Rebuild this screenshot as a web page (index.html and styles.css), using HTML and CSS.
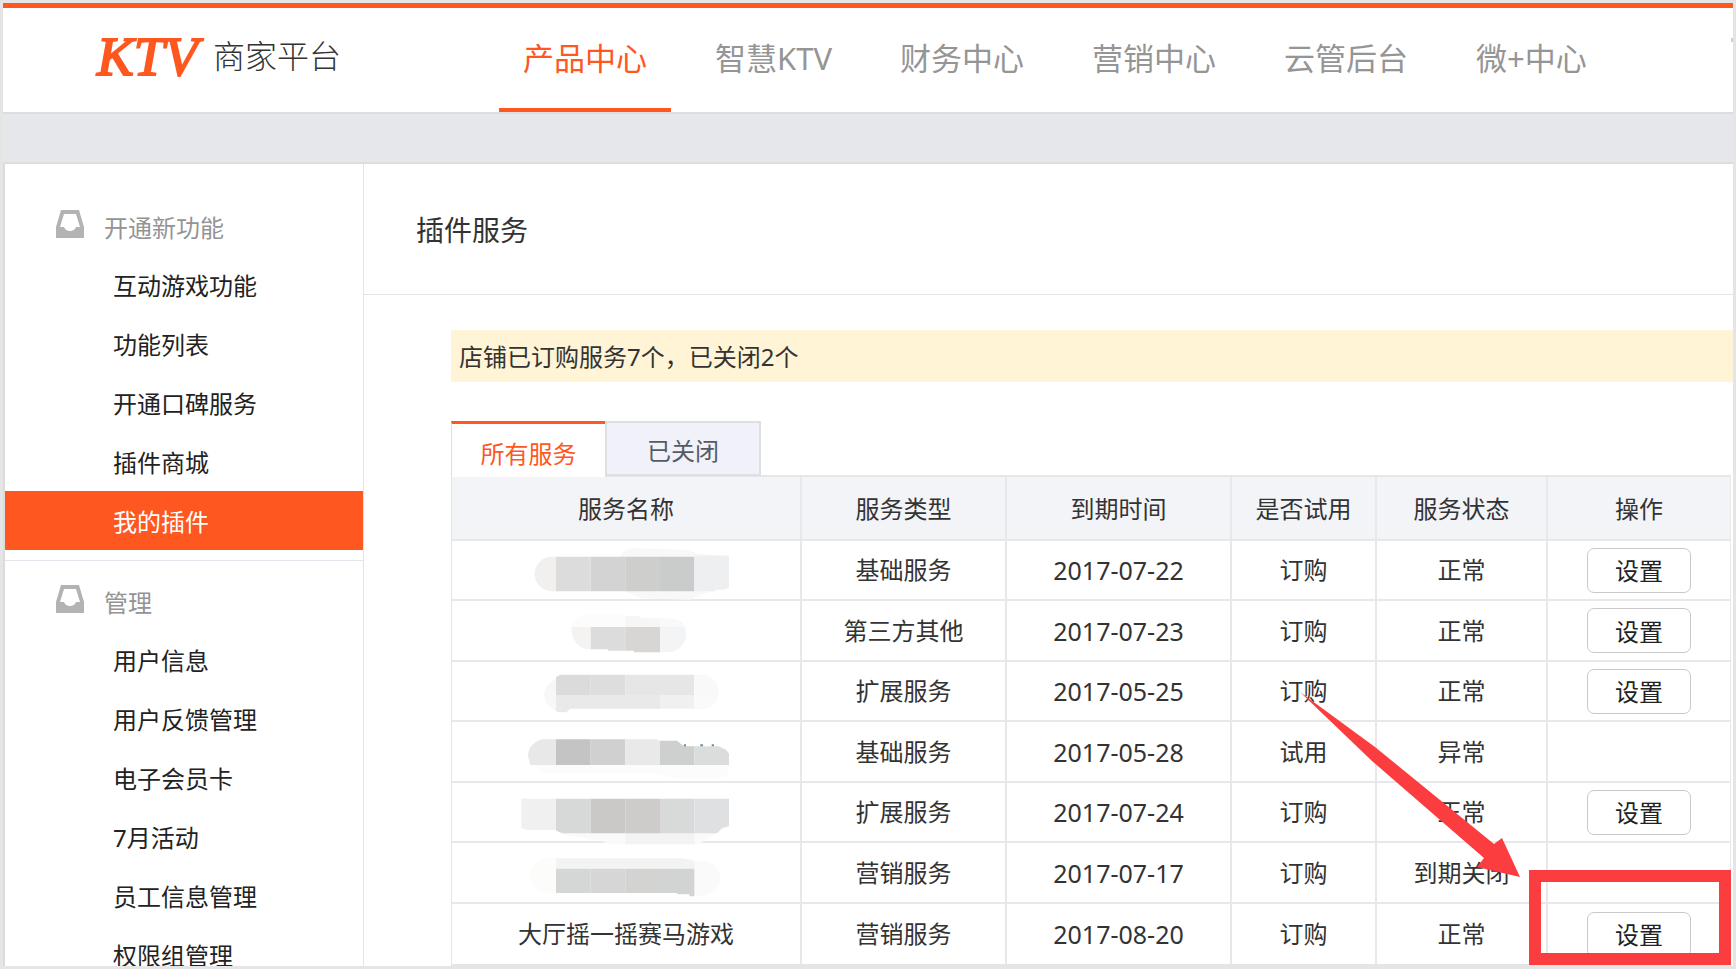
FILE: index.html
```html
<!DOCTYPE html>
<html lang="zh-CN">
<head>
<meta charset="utf-8">
<title>KTV 商家平台</title>
<link rel="stylesheet" href="styles.css">
</head>
<body>
<div class="page">
  <header class="topbar">
    <div class="brand"><span class="brand-mark">KTV</span><span class="brand-name">商家平台</span></div>
    <nav class="nav">
      <a class="nav-item nav-active" href="#">产品中心</a>
      <a class="nav-item" href="#">智慧KTV</a>
      <a class="nav-item" href="#">财务中心</a>
      <a class="nav-item" href="#">营销中心</a>
      <a class="nav-item" href="#">云管后台</a>
      <a class="nav-item" href="#">微+中心</a>
    </nav>
    <span class="nav-edge"></span>
  </header>
  <div class="band"></div>
  <div class="body">
    <aside class="sidebar">
      <section class="group">
        <h2 class="group-title">
          <svg class="tray" viewBox="0 0 28 28"><path fill-rule="evenodd" d="M5 0H23L28 17V28H0V17ZM8 4L4 17H8Q9.500 21 14 21T20 17H24L20 4Z"/></svg>
          开通新功能</h2>
        <a class="item" href="#">互动游戏功能</a>
        <a class="item" href="#">功能列表</a>
        <a class="item" href="#">开通口碑服务</a>
        <a class="item" href="#">插件商城</a>
        <a class="item item-active" href="#">我的插件</a>
      </section>
      <section class="group group-next">
        <h2 class="group-title">
          <svg class="tray" viewBox="0 0 28 28"><path fill-rule="evenodd" d="M5 0H23L28 17V28H0V17ZM8 4L4 17H8Q9.500 21 14 21T20 17H24L20 4Z"/></svg>
          管理</h2>
        <a class="item" href="#">用户信息</a>
        <a class="item" href="#">用户反馈管理</a>
        <a class="item" href="#">电子会员卡</a>
        <a class="item" href="#">7月活动</a>
        <a class="item" href="#">员工信息管理</a>
        <a class="item" href="#">权限组管理</a>
      </section>
    </aside>
    <main class="main">
      <h1 class="title">插件服务</h1>
      <div class="content">
        <p class="notice">店铺已订购服务7个，已关闭2个</p>
        <div class="tabs">
          <button class="tab tab-active" type="button">所有服务</button>
          <button class="tab" type="button">已关闭</button>
        </div>
        <table class="services">
          <colgroup><col class="c-name"><col class="c-type"><col class="c-date"><col class="c-trial"><col class="c-state"><col class="c-action"></colgroup>
          <thead>
            <tr><th>服务名称</th><th>服务类型</th><th>到期时间</th><th>是否试用</th><th>服务状态</th><th>操作</th></tr>
          </thead>
          <tbody>
            <tr>
              <td><svg class="mosaic" viewBox="0 0 1044 174">
                <path fill="#f8f8f9" d="M500 50Q520 22 550 22L700 26L740 38L830 44V120L770 152L715 176L570 172L520 152Z"/>
                <path fill="#f1f0ee" d="M312 47H300A52 52 0 0 0 300 151H312Z"/>
                <path fill="#dcdcdc" d="M312 47h104v104h-104z"/><path fill="#d3d3d3" d="M416 47h104v104h-104z"/><path fill="#cecfcc" d="M520 47h104v104h-104z"/><path fill="#cacccb" d="M624 47h103v104h-103z"/>
                <path fill="#eeeff1" d="M727 44H831V140L815 146H790V151H727Z"/></svg></td>
              <td>基础服务</td><td class="date">2017-07-22</td><td>订购</td><td>正常</td><td><button class="set" type="button">设置</button></td>
            </tr>
            <tr>
              <td><svg class="mosaic" viewBox="0 0 1044 174">
                <path fill="#fcfcfc" d="M358 75Q370 36 420 36H520V75Z"/><path fill="#f6f6f6" d="M520 43H565V49H624V75H520Z"/><path fill="#f9f9f9" d="M624 49H650Q690 50 700 75H624Z"/>
                <path fill="#f4f3f1" d="M358 75H416V142H400Q358 125 358 75Z"/><path fill="#dcdcdd" d="M416 75h104v71h-52v-4h-52z"/><path fill="#d7d6d4" d="M520 75h104v76h-78v-5h-26z"/><path fill="#f3f4f6" d="M624 75H700Q708 115 684 138L660 150H624Z"/></svg></td>
              <td>第三方其他</td><td class="date">2017-07-23</td><td>订购</td><td>正常</td><td><button class="set" type="button">设置</button></td>
            </tr>
            <tr>
              <td><svg class="mosaic" viewBox="0 0 1044 174">
                <path fill="#f7f7f7" d="M312 50Q276 72 276 100Q280 132 312 147Z"/>
                <path fill="#dbdbdb" d="M312 45L325 38H416V99H312Z"/><path fill="#dddddd" d="M416 38h104v61h-104z"/><path fill="#e6e6e6" d="M520 38h207v61h-207z"/><path fill="#f8faf9" d="M727 38H760Q800 48 800 99H727Z"/>
                <path fill="#e9e9e9" d="M312 99H624V140H355L343 151H319L312 146Z"/><path fill="#f0f0ee" d="M624 99h103v41h-103z"/><path fill="#f9faf9" d="M727 99H800Q792 140 750 141H727Z"/></svg></td>
              <td>扩展服务</td><td class="date">2017-05-25</td><td>订购</td><td>正常</td><td><button class="set" type="button">设置</button></td>
            </tr>
            <tr>
              <td><svg class="mosaic" viewBox="0 0 1044 174">
                <path fill="#fcfcfc" d="M250 126H835Q832 166 790 167H680L600 150H270Z"/>
                <path fill="#e8e8e8" d="M312 49H270Q228 62 228 100L235 126H312Z"/><path fill="#c4c4c4" d="M312 49h104v77h-104z"/><path fill="#d0d0d0" d="M416 49h104v77h-104z"/><path fill="#e9e9e9" d="M520 49h92l12 4v73h-104z"/><path fill="#ced0cf" d="M624 53H675L690 65L705 70H727V126H624Z"/><path fill="#dbdddc" d="M727 70H800L822 80L831 92V126H727Z"/>
                <path fill="#6b8fa8" d="M696 64h6v6h-6zM745 64h8v6h-8zM779 64h7v6h-7z"/></svg></td>
              <td>基础服务</td><td class="date">2017-05-28</td><td>试用</td><td>异常</td><td></td>
            </tr>
            <tr>
              <td><svg class="mosaic" viewBox="0 0 1044 174">
                <path fill="#fafafa" d="M312 150H790L740 184H475L450 175Z"/><path fill="#f3f3f3" d="M520 150h207v34h-207z"/>
                <path fill="#f0f0f0" d="M208 47h104v94h-85l-19 -5z"/><path fill="#d6d9d7" d="M312 47h104v104h-84l-20 -8z"/><path fill="#cbc9c7" d="M416 47h104v104h-104z"/><path fill="#cdccca" d="M520 47h104v104h-104z"/><path fill="#d8dad9" d="M624 47h103v104h-103z"/><path fill="#dfe0e2" d="M727 47H831V130L810 136L795 151H727Z"/></svg></td>
              <td>扩展服务</td><td class="date">2017-07-24</td><td>订购</td><td>正常</td><td><button class="set" type="button">设置</button></td>
            </tr>
            <tr>
              <td><svg class="mosaic" viewBox="0 0 1044 174">
                <path fill="#fcfcfa" d="M312 42H280Q234 56 234 98Q240 144 290 147H312Z"/><path fill="#fafafa" d="M727 50H760Q802 60 804 104Q800 150 740 157H727Z"/>
                <path fill="#f3f3f3" d="M312 43h380l35 6v25h-415z"/><path fill="#d4d7d5" d="M312 74h104v73h-104z"/><path fill="#d6d6d6" d="M416 74h104v73h-104z"/><path fill="#d3d3d1" d="M520 74h104v73h-104z"/><path fill="#d2d4d3" d="M624 74H727V157H712V151H676V147H624Z"/></svg></td>
              <td>营销服务</td><td class="date">2017-07-17</td><td>订购</td><td>到期关闭</td><td></td>
            </tr>
            <tr>
              <td>大厅摇一摇赛马游戏</td><td>营销服务</td><td class="date">2017-08-20</td><td>订购</td><td>正常</td>
              <td class="marked"><button class="set" type="button">设置</button>
                <span class="mark-box"></span>
                <svg class="mark-arrow" viewBox="0 0 222 190"><path d="M0 1L75 56L194 153L202 147L220 186L177 176L184 167L72 70Z"/></svg>
              </td>
            </tr>
          </tbody>
        </table>
      </div>
    </main>
  </div>
</div>
</body>
</html>
```
FILE: styles.css
```css
* { box-sizing: border-box; }

body {
  margin: 0;
  padding: 3px;
  height: 100vh;
  overflow: hidden;
  background: #e5e5e5;
  color: #333;
  font: 24px/36px "Noto Sans", "Noto Sans CJK SC", sans-serif;
}

a { color: inherit; text-decoration: none; }
h1, h2, p { margin: 0; font-weight: 400; }

.page {
  height: 100%;
  overflow: hidden;
  display: flex;
  flex-direction: column;
}

/* Header */
.topbar {
  flex: none;
  display: flex;
  height: 111px;
  background: #fff;
  border-top: 5px solid #fe571f;
  border-bottom: 2px solid #dcddde;
}

.brand {
  display: flex;
  align-items: center;
  width: 496px;
  padding: 0 0 8px 94px;
}

.brand-mark {
  width: 116px;
  padding-top: 2px;
  color: #fe571f;
  font: italic 400 55px/60px "Liberation Serif", serif;
  -webkit-text-stroke: 2px #fe571f;
}

.brand-name { font-size: 32px; font-weight: 300; color: #333; }

.nav { display: flex; gap: 20px; }

.nav-item {
  padding: 0 24px;
  color: #959595;
  font-size: 31px;
  line-height: 101px;
}

.nav-active {
  color: #fe571f;
  border-bottom: 4px solid #fe571f;
}

.nav-edge {
  width: 2px;
  height: 4px;
  margin: 30px 0 0 auto;
  background: #d0d0d0;
}

.band {
  flex: none;
  height: 50px;
  background: #e6e7ea;
  border-bottom: 2px solid #dcddde;
}

.body {
  flex: 1;
  min-height: 0;
  display: flex;
  background: #fff;
}

/* Sidebar */
.sidebar {
  flex: none;
  width: 361px;
  padding-top: 32px;
  border-left: 2px solid #dcdcdc;
  border-right: 1px solid #e3e4e8;
}

.group-title, .item {
  display: flex;
  height: 59px;
  align-items: center;
  font-size: 24px;
}

.group-title {
  gap: 20px;
  padding: 4px 0 0 51px;
  color: #949494;
}

.tray {
  width: 28px;
  height: 28px;
  margin-bottom: 8px;
  fill: #b3b3b3;
}

.item { padding: 2px 0 0 108px; color: #222; }
.item-active { background: #fe571f; color: #fff; }

.group-next {
  margin-top: 10px;
  padding-top: 10px;
  border-top: 1px solid #e3e4ec;
}

/* Main column */
.main { flex: 1; min-width: 0; }

.title {
  padding: 48px 52px 46px;
  font-size: 28px;
  border-bottom: 1px solid #e3e4e8;
}

.content { padding: 35px 0 0 87px; }

.notice {
  padding: 9px 8px 7px;
  background: #fff4d5;
}

.tabs {
  display: flex;
  margin: 39px 2px 0 0;
  border-bottom: 2px solid #e6e6e8;
}

.tab {
  width: 156px;
  height: 55px;
  margin: 0 0 -1px;
  padding: 5px 0 0;
  font: inherit;
  color: #555b66;
  background: #f0f1f9;
  border: 2px solid #dedfe2;
}

.tab-active {
  width: 154px;
  height: 56px;
  margin-bottom: -2px;
  padding-top: 6px;
  color: #fe571f;
  background: #fff;
  border-width: 3px 0 0 1px;
  border-top-color: #fe571f;
}

.services {
  width: calc(100% - 2px);
  table-layout: fixed;
  border-collapse: separate;
  border-spacing: 0;
  border-left: 1px solid #e6e6e8;
  border-bottom: 3px solid #e5e5e5;
}

.c-name { width: 350px; }
.c-type { width: 205px; }
.c-date { width: 225px; }
.c-trial { width: 145px; }
.c-state { width: 171px; }
.c-action { width: 183px; }

.services th, .services td {
  height: 60px;
  padding: 0;
  text-align: center;
  vertical-align: middle;
  font-weight: 400;
  border-right: 2px solid #e8e8ea;
  border-bottom: 2px solid #e8e8ea;
}

.services th { height: 64px; padding-top: 2px; background: #f3f4f8; }
.services tr:nth-child(even) td { height: 61px; }
.services th:last-child, .services td:last-child { border-right-width: 1px; }
.services tr:last-child td { border-bottom: 0; }
.services .date { font-size: 25px; }

.mosaic {
  display: block;
  width: 100%;
  height: 58px;
  overflow: visible;
}

.set {
  width: 104px;
  height: 45px;
  padding: 2px 0 0;
  font: inherit;
  color: #222;
  background: #fff;
  border: 1px solid #c9c9c9;
  border-radius: 7px;
  vertical-align: middle;
}

/* Callout over the last row */
.services .marked { position: relative; }

.mark-box {
  position: absolute;
  top: -34px;
  right: -1px;
  bottom: -1px;
  left: -19px;
  border: 12px solid #fb3d40;
}

.mark-arrow {
  position: absolute;
  top: -213px;
  left: -248px;
  width: 222px;
  height: 190px;
  fill: #fb3d40;
}
```
